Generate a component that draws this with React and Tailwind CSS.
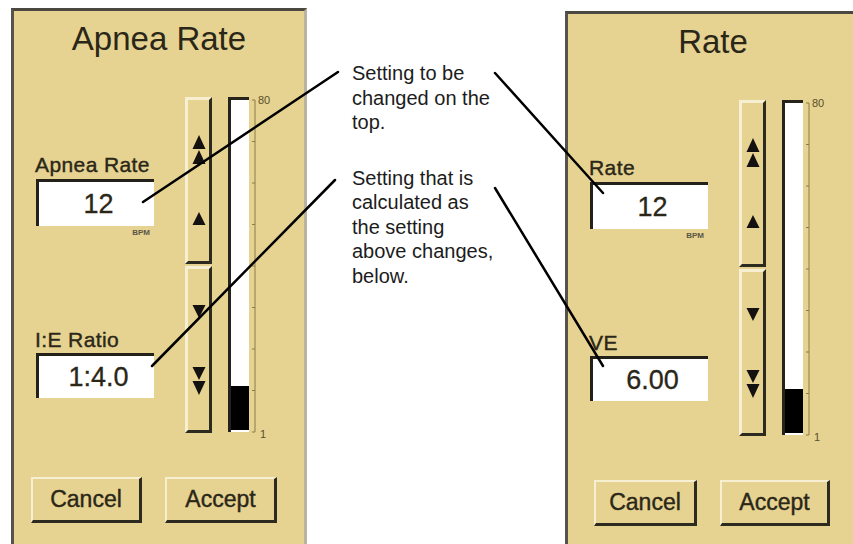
import React from "react";

const ink = "text-[#2b2718]";
const bevel =
  "border-t-[#f7efd2] border-l-[#f7efd2] border-r-[#2d2a1f] border-b-[#2d2a1f]";

const UpDouble = () => (
  <svg width="14" height="30" viewBox="0 0 14 30">
    <path d="M7 0 L13.5 14 L0.5 14 Z M7 15 L13.5 29 L0.5 29 Z" fill="#141210" />
  </svg>
);

const UpSingle = () => (
  <svg width="14" height="13" viewBox="0 0 14 13">
    <path d="M7 0 L13.5 13 L0.5 13 Z" fill="#141210" />
  </svg>
);

const DownSingle = () => (
  <svg width="14" height="13" viewBox="0 0 14 13">
    <path d="M0.5 0 L13.5 0 L7 13 Z" fill="#141210" />
  </svg>
);

const DownDouble = () => (
  <svg width="14" height="28" viewBox="0 0 14 28">
    <path d="M0.5 0 L13.5 0 L7 13 Z M0.5 14 L13.5 14 L7 28 Z" fill="#141210" />
  </svg>
);

const Scale = () => {
  const ticks = [];
  for (let i = 0; i <= 8; i++) {
    ticks.push(10 + i * 41.5);
  }
  return (
    <svg width="26" height="352" viewBox="0 0 26 352" className="ml-[2px] -mt-[7px]">
      <line x1="4" y1="10" x2="4" y2="342" stroke="#8c7b45" strokeWidth="1" />
      {ticks.map((y, i) => (
        <line key={i} x1="1" y1={y} x2="4" y2={y} stroke="#8c7b45" strokeWidth="1" />
      ))}
      <text x="7" y="14" fontSize="11" fill="#5a4f2a" fontFamily="Liberation Sans, Arial, sans-serif">
        80
      </text>
      <text x="9" y="348" fontSize="11" fill="#5a4f2a" fontFamily="Liberation Sans, Arial, sans-serif">
        1
      </text>
    </svg>
  );
};

const ValueBox = ({ value, h }) => (
  <div
    className={`w-[118px] ${h} bg-white border-l-[3px] border-t-[3px] border-[#24211a] flex items-center justify-center pl-[4px] text-[27px] leading-none ${ink} [-webkit-text-stroke:0.3px_#2b2718]`}
  >
    {value}
  </div>
);

const Panel = ({ title, label1, value1, unit1, label2, value2, className, cancelW, acceptW, cancelMl }) => (
  <div
    className={`w-[296px] h-[540px] shrink-0 bg-[#e6d391] border-l-[3px] border-t-[3px] border-r-[3px] border-l-[#55534b] border-t-[#4a4840] border-r-[#b9b3a0] flex flex-col ${className}`}
  >
    <div className={`pt-[8px] text-center text-[33px] leading-[40px] ${ink}`}>{title}</div>

    <div className="mt-[38px] h-[336px] flex items-start">
      <div className="w-[140px] pl-[22px] flex flex-col">
        <div className={`mt-[56px] h-[24px] text-[21px] leading-[24px] tracking-[0.4px] -ml-[1px] ${ink} [-webkit-text-stroke:0.4px_#2b2718]`}>
          {label1}
        </div>
        <div className="mt-[2px]">
          <ValueBox value={value1} h="h-[47px]" />
        </div>
        <div className="mt-[2px] h-[10px] w-[118px] pr-[4px] text-right text-[8px] leading-[10px] font-bold text-[#5a5546]">
          {unit1}
        </div>
        <div className={`mt-[90px] h-[24px] text-[21px] leading-[24px] tracking-[0.4px] -ml-[1px] ${ink} [-webkit-text-stroke:0.4px_#2b2718]`}>
          {label2}
        </div>
        <div className="mt-[1px]">
          <ValueBox value={value2} h="h-[45px]" />
        </div>
      </div>

      <div className="ml-[31px] flex flex-col gap-[2px]">
        <div className={`w-[27px] h-[167px] border-[3px] ${bevel} flex flex-col items-center pt-[35px]`}>
          <UpDouble />
          <div className="mt-[47px]">
            <UpSingle />
          </div>
        </div>
        <div className={`w-[27px] h-[167px] border-[3px] ${bevel} flex flex-col items-center pt-[36px]`}>
          <DownSingle />
          <div className="mt-[49px]">
            <DownDouble />
          </div>
        </div>
      </div>

      <div className="ml-[16px] w-[21px] h-[335px] bg-white border-l-[3px] border-t-[3px] border-[#26231a] flex flex-col justify-end pb-[2px]">
        <div className="h-[44px] bg-black" />
      </div>
      <Scale />
    </div>

    <div className="mt-[44px] flex items-start">
      <div
        style={{ width: cancelW, marginLeft: cancelMl }}
        className={`h-[46px] border-t-2 border-l-2 border-r-[3px] border-b-[3px] ${bevel} flex items-center justify-center text-[23px] ${ink} [-webkit-text-stroke:0.4px_#2b2718]`}
      >
        Cancel
      </div>
      <div
        style={{ width: acceptW }}
        className={`ml-[23px] h-[46px] border-t-2 border-l-2 border-r-[3px] border-b-[3px] ${bevel} flex items-center justify-center text-[23px] ${ink} [-webkit-text-stroke:0.4px_#2b2718]`}
      >
        Accept
      </div>
    </div>
  </div>
);

export default function App() {
  return (
    <div className="relative w-[853px] h-[544px] bg-white overflow-hidden flex font-['Liberation_Sans',Arial,sans-serif]">
      <Panel
        className="ml-[11px] mt-[8px]"
        title="Apnea Rate"
        label1="Apnea Rate"
        value1="12"
        unit1="BPM"
        label2="I:E Ratio"
        value2="1:4.0"
        cancelW={111}
        acceptW={112}
        cancelMl={17}
      />

      <div className="w-[258px] shrink-0 pl-[45px] pt-[61px] text-[20px] leading-[24.5px] text-[#1c1c1c]">
        <div>Setting to be</div>
        <div>changed on the</div>
        <div>top.</div>
        <div className="mt-[31px]">Setting that is</div>
        <div>calculated as</div>
        <div>the setting</div>
        <div>above changes,</div>
        <div>below.</div>
      </div>

      <Panel
        className="mt-[11px]"
        title="Rate"
        label1="Rate"
        value1="12"
        unit1="BPM"
        label2="VE"
        value2="6.00"
        cancelW={103}
        acceptW={110}
        cancelMl={26}
      />

      <svg className="absolute inset-0 pointer-events-none" width="853" height="544" viewBox="0 0 853 544">
        <g stroke="#000" strokeWidth="2.5" strokeLinecap="round">
          <line x1="143" y1="202" x2="338" y2="72" />
          <line x1="152" y1="366" x2="335" y2="180" />
          <line x1="495" y1="73" x2="603" y2="193" />
          <line x1="495" y1="188" x2="603" y2="366" />
        </g>
      </svg>
    </div>
  );
}
